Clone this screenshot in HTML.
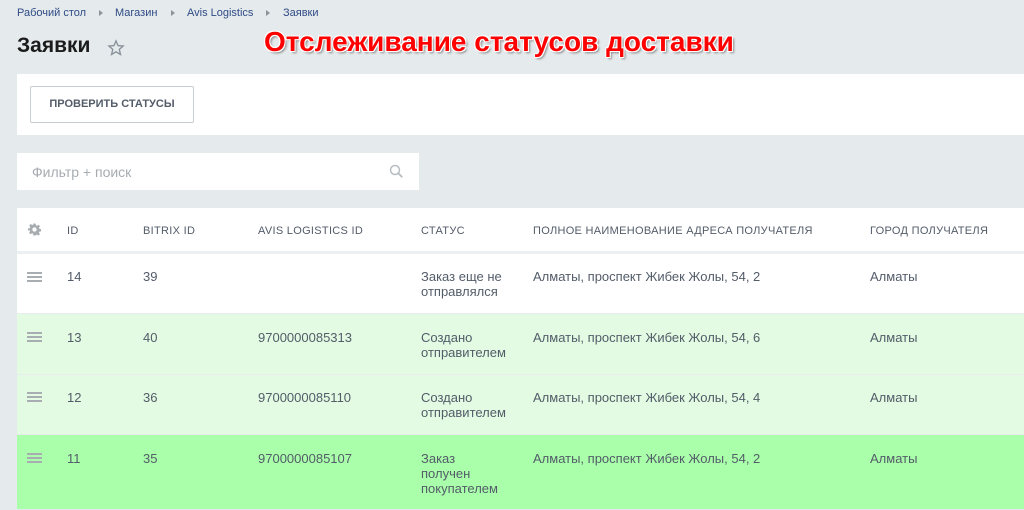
<!DOCTYPE html>
<html><head><meta charset="utf-8"><style>
*{margin:0;padding:0;box-sizing:border-box}
body{width:1024px;height:510px;overflow:hidden;background:#e5eaec;font-family:"Liberation Sans",Arial,sans-serif;position:relative}
.a{position:absolute;white-space:nowrap}
.bc{top:7px;font-size:11px;color:#2f4a86}
.arr{top:10px;width:0;height:0;border-left:4px solid #8c9399;border-top:3px solid transparent;border-bottom:3px solid transparent}
.hd{font-size:11px;color:#535c69;letter-spacing:.3px;top:225px}
.c{font-size:13px;color:#535c69;line-height:15px;white-space:normal}
.row{position:absolute;left:17px;width:1007px}
.burg{position:absolute;left:10px;width:15px;height:2px;background:#a8adb2}
</style></head><body>
<div class="a bc" style="left:17px">Рабочий стол</div><div class="a arr" style="left:99px"></div>
<div class="a bc" style="left:115px">Магазин</div><div class="a arr" style="left:171px"></div>
<div class="a bc" style="left:187px">Avis Logistics</div><div class="a arr" style="left:266px"></div>
<div class="a bc" style="left:283px">Заявки</div>
<div class="a" style="left:17px;top:34px;font-size:21px;font-weight:bold;color:#1b1b1b">Заявки</div>
<svg class="a" style="left:107px;top:39px" width="18" height="18" viewBox="0 0 24 24"><path d="M12 2.5l2.8 6.3 6.8.6-5.2 4.5 1.6 6.7L12 17l-5.9 3.6 1.6-6.7L2.5 9.4l6.8-.6z" fill="none" stroke="#8a9299" stroke-width="1.8"/></svg>
<div class="a" style="left:264px;top:26px;font-size:28px;font-weight:bold;color:#f00;text-shadow:-1px -1px 0 #fff,1px -1px 0 #fff,-1px 1px 0 #fff,1px 1px 0 #fff,2px 2px 2px #888;letter-spacing:0px">Отслеживание статусов доставки</div>
<div class="a" style="left:17px;top:74px;width:1007px;height:61px;background:#fff"></div>
<div class="a" style="left:30px;top:86px;width:164px;height:37px;border:1px solid #c6cdd3;border-radius:2px;background:#fff;font-size:11px;font-weight:bold;color:#535c69;text-align:center;line-height:35px">ПРОВЕРИТЬ СТАТУСЫ</div>
<div class="a" style="left:17px;top:153px;width:402px;height:37px;background:#fff"></div>
<div class="a" style="left:32px;top:164px;font-size:14px;color:#a6acb2">Фильтр + поиск</div>
<svg class="a" style="left:389px;top:164px" width="15" height="15" viewBox="0 0 15 15"><circle cx="6" cy="6" r="4.5" fill="none" stroke="#b8bdc2" stroke-width="1.5"/><path d="M9.3 9.3l4 4" stroke="#b8bdc2" stroke-width="1.8"/></svg>
<div class="row" style="top:208px;height:43px;background:#fff"></div>
<div class="row" style="top:251px;height:3px;background:#edf0f2"></div>
<svg class="a" style="left:28px;top:223px" width="13" height="13" viewBox="0 0 24 24"><path fill="#a8adb2" d="M10 1h4l.6 3.2 2 .9 2.7-1.9 2.8 2.8-1.9 2.7.9 2 3.2.6v4l-3.2.6-.9 2 1.9 2.7-2.8 2.8-2.7-1.9-2 .9L14 23h-4l-.6-3.2-2-.9-2.7 1.9-2.8-2.8 1.9-2.7-.9-2L0 14v-4l3.2-.6.9-2-1.9-2.7 2.8-2.8 2.7 1.9 2-.9zM12 8a4 4 0 100 8 4 4 0 000-8z"/></svg>
<div class="a hd" style="left:67px">ID</div>
<div class="a hd" style="left:143px">BITRIX ID</div>
<div class="a hd" style="left:258px">AVIS LOGISTICS ID</div>
<div class="a hd" style="left:421px">СТАТУС</div>
<div class="a hd" style="left:533px">ПОЛНОЕ НАИМЕНОВАНИЕ АДРЕСА ПОЛУЧАТЕЛЯ</div>
<div class="a hd" style="left:870px">ГОРОД ПОЛУЧАТЕЛЯ</div>

<div class="row" style="top:254px;height:59px;background:#fff"></div>
<div class="row" style="top:313px;height:1px;background:#e8ecee"></div>
<div class="row" style="top:314px;height:60px;background:#e2fbe2"></div>
<div class="row" style="top:374px;height:1px;background:#e8ecee"></div>
<div class="row" style="top:375px;height:59px;background:#e2fbe2"></div>
<div class="row" style="top:434px;height:1px;background:#e8ecee"></div>
<div class="row" style="top:435px;height:74px;background:#aaffaa"></div>

<div class="a" style="left:0;top:0">
<div style="position:absolute;left:17px;top:272px;width:20px"><div class="burg" style="top:0"></div><div class="burg" style="top:4px"></div><div class="burg" style="top:8px"></div></div>
<div style="position:absolute;left:17px;top:332px;width:20px"><div class="burg" style="top:0"></div><div class="burg" style="top:4px"></div><div class="burg" style="top:8px"></div></div>
<div style="position:absolute;left:17px;top:392px;width:20px"><div class="burg" style="top:0"></div><div class="burg" style="top:4px"></div><div class="burg" style="top:8px"></div></div>
<div style="position:absolute;left:17px;top:453px;width:20px"><div class="burg" style="top:0"></div><div class="burg" style="top:4px"></div><div class="burg" style="top:8px"></div></div>
</div>

<div class="a c" style="left:67px;top:269px">14</div>
<div class="a c" style="left:143px;top:269px">39</div>
<div class="a c" style="left:421px;top:269px;width:100px">Заказ еще не отправлялся</div>
<div class="a c" style="left:533px;top:269px">Алматы, проспект Жибек Жолы, 54, 2</div>
<div class="a c" style="left:870px;top:269px">Алматы</div>

<div class="a c" style="left:67px;top:330px">13</div>
<div class="a c" style="left:143px;top:330px">40</div>
<div class="a c" style="left:258px;top:330px">9700000085313</div>
<div class="a c" style="left:421px;top:330px;width:100px">Создано отправителем</div>
<div class="a c" style="left:533px;top:330px">Алматы, проспект Жибек Жолы, 54, 6</div>
<div class="a c" style="left:870px;top:330px">Алматы</div>

<div class="a c" style="left:67px;top:390px">12</div>
<div class="a c" style="left:143px;top:390px">36</div>
<div class="a c" style="left:258px;top:390px">9700000085110</div>
<div class="a c" style="left:421px;top:390px;width:100px">Создано отправителем</div>
<div class="a c" style="left:533px;top:390px">Алматы, проспект Жибек Жолы, 54, 4</div>
<div class="a c" style="left:870px;top:390px">Алматы</div>

<div class="a c" style="left:67px;top:451px">11</div>
<div class="a c" style="left:143px;top:451px">35</div>
<div class="a c" style="left:258px;top:451px">9700000085107</div>
<div class="a c" style="left:421px;top:451px;width:70px">Заказ получен покупателем</div>
<div class="a c" style="left:533px;top:451px">Алматы, проспект Жибек Жолы, 54, 2</div>
<div class="a c" style="left:870px;top:451px">Алматы</div>
</body></html>
